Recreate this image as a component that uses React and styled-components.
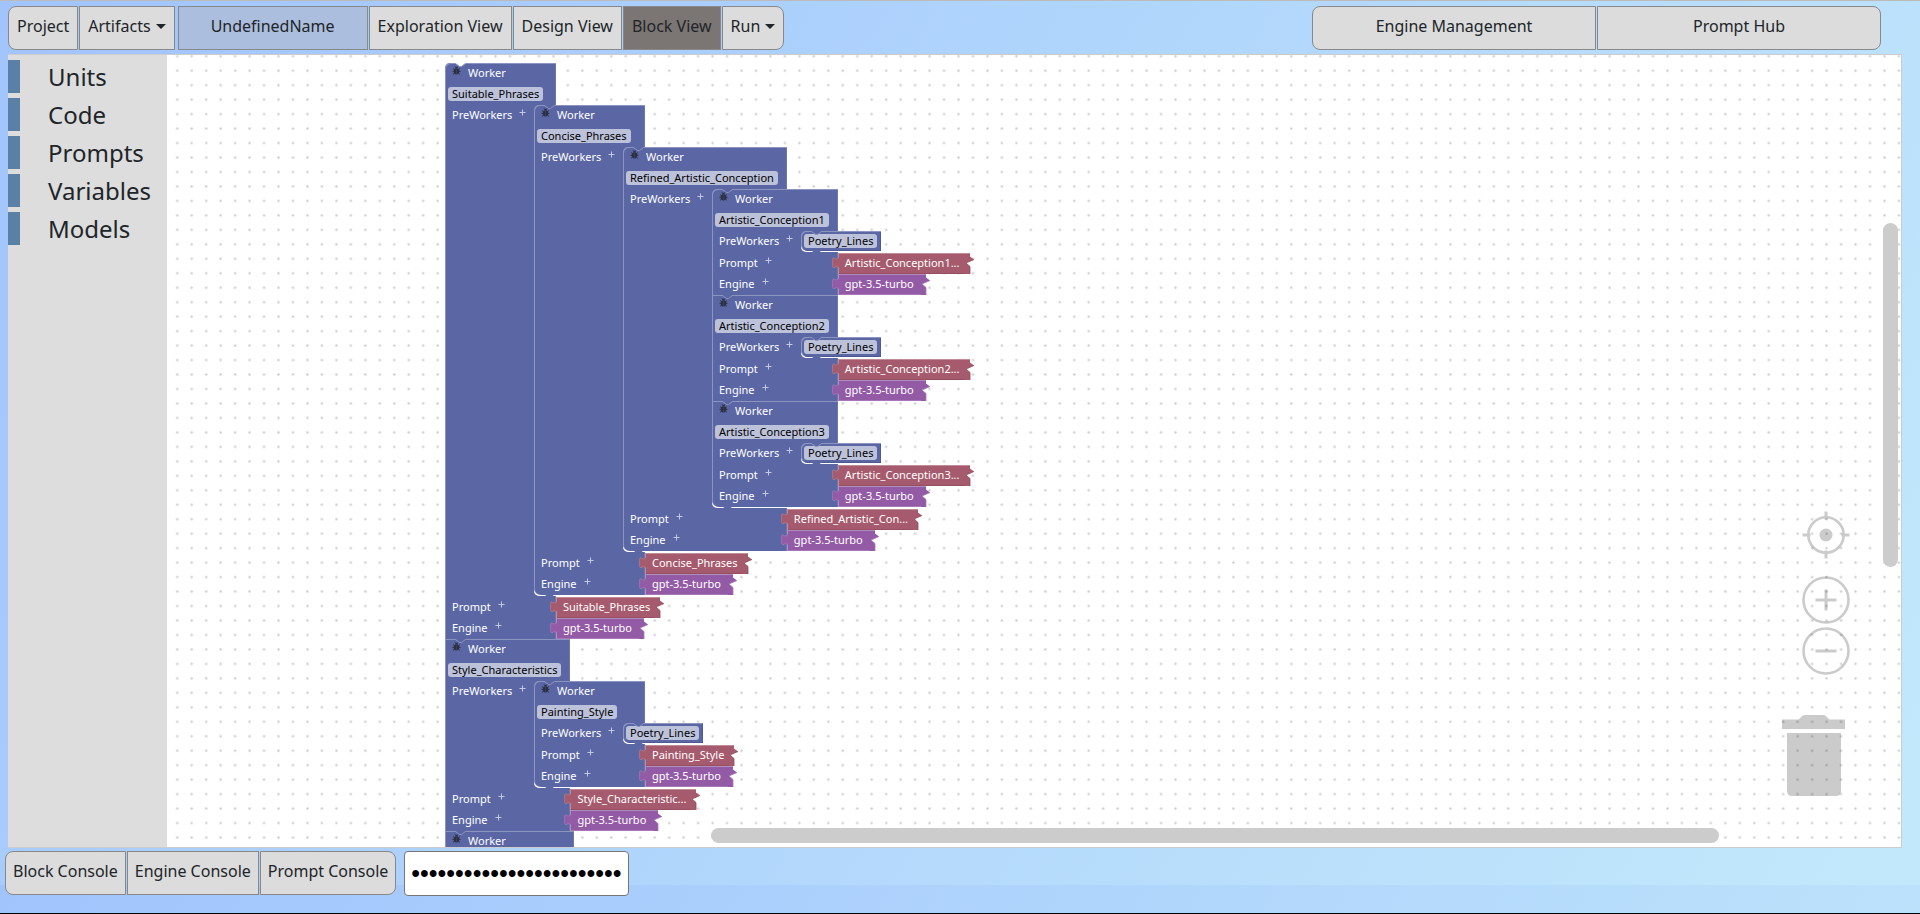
import React from 'react';
import styled, { createGlobalStyle, css } from 'styled-components';

const colors = {
  worker: '#5b67a5',
  prompt: '#a55b6d',
  engine: '#935ba5',
};

const GlobalStyle = createGlobalStyle`
  *, *::before, *::after { box-sizing: border-box; }
  body {
    margin: 0;
    color: #212529;
    font-family: 'Noto Sans', 'Open Sans', sans-serif;
    font-size: 16px;
    line-height: 24px;
  }
  button, input { font: inherit; color: inherit; }
`;

const Page = styled.div`
  display: flex;
  flex-direction: column;
  height: 100vh;
  border-top: 1px solid #bbb;
  border-bottom: 1px solid #000;
  background: linear-gradient(120deg, #a1c4fd, #c2e9fb) 0 0 / 100% calc(100% - 28px);
`;

const TopBar = styled.header`
  display: flex;
  justify-content: space-between;
  padding: 5px 39px 4px 8px;
`;

const ButtonGroup = styled.div`
  display: flex;
  gap: 1px;

  > button:first-child {
    border-top-left-radius: 8px;
    border-bottom-left-radius: 8px;
  }
  > button:last-child {
    border-top-right-radius: 8px;
    border-bottom-right-radius: 8px;
  }
`;

const tones = {
  plain: '#dcdcdc',
  name: '#acbedd',
  active: '#7b7574',
};

const BarButton = styled.button`
  display: flex;
  align-items: center;
  justify-content: center;
  gap: 5px;
  height: 44px;
  min-width: ${(p) => p.$minWidth || 0}px;
  padding: 6px ${(p) => (p.$compact ? 7 : 8)}px 10px;
  border: 1px solid #888;
  border-radius: 0;
  background: ${(p) => tones[p.$tone || 'plain']};
  white-space: nowrap;
`;

const NameButton = styled(BarButton)`
  margin-left: 2px;
`;

const Caret = styled.span`
  border: 5px solid transparent;
  border-top-color: currentColor;
  border-bottom: 0;
`;

const Workspace = styled.main`
  display: flex;
  flex: 1;
  min-height: 0;
  margin: 0 18px 0 8px;
  border: 1px solid #ccc;
  border-left: 0;
  background: #fff;
`;

const Toolbox = styled.nav`
  display: flex;
  flex-direction: column;
  gap: 5px;
  width: 159px;
  padding-top: 5px;
  background: #ddd;
`;

const Category = styled.button`
  height: 33px;
  padding: 0 0 0 28px;
  border: 0;
  border-left: 12px solid #5b80a5;
  background: none;
  font-size: 24px;
  line-height: 33px;
  text-align: left;
`;

const Canvas = styled.section`
  position: relative;
  flex: 1;
  overflow: hidden;
  padding: 8px 0 0 278px;
`;

const Grid = styled.svg`
  position: absolute;
  inset: 0;
  width: 100%;
  height: 100%;
`;

const Program = styled.div`
  position: relative;
  display: flex;
  flex-direction: column;
  width: max-content;
  color: #fff;
  font-size: 11px;
  line-height: 20px;
  white-space: nowrap;
`;

const Block = styled.article`
  position: relative;
  display: grid;
  grid-template-columns: 89px minmax(22px, 1fr);
  width: max-content;
  min-width: ${(p) => p.$minWidth || 0}px;
  background: ${colors.worker};
  box-shadow: inset 1px 1px #8c95c0, inset -1px 0 #6c77ae;
  border-top-left-radius: ${(p) => (p.$first ? 5 : 0)}px;
  border-bottom-left-radius: ${(p) => (p.$last ? 7 : 0)}px;
`;

const HeaderRow = styled.header`
  grid-column: 1 / -1;
  display: flex;
  align-items: flex-start;
  gap: 7px;
  height: 21px;
  padding: 3px 0 0 7px;
  line-height: 13px;
`;

const FieldRow = styled.div`
  grid-column: 1 / -1;
  height: 21px;
  padding: 3px 9px 0 3px;
`;

const Field = styled.button`
  display: block;
  height: 14px;
  padding: 0 4px;
  border: 0;
  border-radius: 3px;
  background: #bdc2db;
  color: #000;
  line-height: 14px;
`;

const Label = styled.div`
  display: flex;
  gap: 7px;
  height: 21px;
  padding-left: 7px;
`;

const Statement = styled.div`
  position: relative;
  display: flex;
  flex-direction: column;
  width: 0;
  min-width: 100%;
  margin-bottom: 1px;
  padding-bottom: 1px;
  border-bottom-left-radius: 5px;
  background: linear-gradient(to top, #fff 8px, transparent 8px);
`;

const VariableBlock = styled.div`
  position: relative;
  width: max-content;
  height: 20px;
  padding: 3px 4px 3px 3px;
  border-radius: 5px 0 0 7px;
  background: ${colors.worker};
  box-shadow: inset 1px 1px #8c95c0, inset -1px -1px #4f5a94;
`;

const ValueRow = styled.div`
  grid-column: 1 / -1;
  display: flex;
  justify-content: space-between;
  height: 21px;
`;

const Socket = styled.div`
  position: relative;
  display: flex;
  width: 0;
`;

const ValueBody = styled.div`
  height: 21px;
  ${(p) =>
    p.$kind === 'prompt'
      ? css`padding: 0 5px 0 7px; box-shadow: inset 1px 1px #c08c98, inset 0 -1px #944f60;`
      : css`padding: 0 7px; box-shadow: inset 1px 1px #b38cc0, inset 0 -1px #a777b6;`}
  background: ${(p) => colors[p.$kind]};
`;

const TabShape = styled.svg`
  position: absolute;
  top: 3px;
  left: -6px;
`;

const TeethShape = styled.svg`
  flex: none;
`;

const NotchShape = styled.svg`
  position: absolute;
  top: 0;
  left: 9px;
`;

const NubShape = styled.svg`
  position: absolute;
  bottom: -3px;
  left: 9px;
`;

const PlusShape = styled.svg`
  margin-top: 4px;
`;

const Scrollbar = styled.div`
  position: absolute;
  border-radius: 8px;
  background: #ccc;
  ${(p) =>
    p.$vertical
      ? css`top: 168px; right: 3px; width: 15px; height: 344px;`
      : css`left: 544px; right: 182px; bottom: 4px; height: 15px;`}
`;

const Controls = styled.div`
  position: absolute;
  right: 51px;
  bottom: 51px;
  display: flex;
  flex-direction: column;
  align-items: flex-end;
  color: #000;
`;

const ControlButton = styled.button`
  display: block;
  margin-bottom: ${(p) => p.$after || 0}px;
  padding: 0;
  border: 0;
  background: none;
  line-height: 0;
`;

const BottomBar = styled.footer`
  display: flex;
  gap: 8px;
  height: 65px;
  padding: 3px 5px 0;
`;

const KeyInput = styled.input`
  width: 225px;
  height: 45px;
  padding: 0 6px;
  border: 1px solid #767676;
  border-radius: 4px;
  background: #fff;
  color: #000;
  font-family: 'Liberation Sans', Arial, sans-serif;
  font-size: 25px;
`;

const Plus = () => (
  <PlusShape width="7" height="7" viewBox="0 0 7 7" aria-hidden="true">
    <path d="M3.5 0.5v6M0.5 3.5h6" stroke="#c4c9e2" strokeWidth="1" />
  </PlusShape>
);

const Bug = () => (
  <svg width="9" height="9" viewBox="0 0 9 9" aria-hidden="true">
    <path d="M3 2.2a1.5 1.5 0 0 1 3 0z" fill="#2c3042" />
    <ellipse cx="4.5" cy="5.3" rx="2.8" ry="3.1" fill="#2c3042" />
    <path d="M0.5 5.4h8M1 2.6l2 1.4M8 2.6L6 4M1 8.4l2-1.6M8 8.4L6 6.8M3 0.3l.8 1M6 0.3l-.8 1" stroke="#2c3042" strokeWidth="0.9" fill="none" />
    <path d="M4.5 3.4v4.6" stroke="#5b67a5" strokeWidth="0.3" />
  </svg>
);

const Notch = ({ open }) => (
  <NotchShape width="14" height="5" viewBox="0 0 14 5" aria-hidden="true">
    <path d="M1 0L5.5 3.5H7.5L12 0z" fill={open ? '#fff' : colors.worker} />
    <path d="M0 .5H1.5L5.5 3.5H7.5L11.5 .5H14" fill="none" stroke="#8c95c0" />
  </NotchShape>
);

const Nub = () => (
  <NubShape width="14" height="4" viewBox="0 0 14 4" aria-hidden="true">
    <path d="M1 0L5.5 4H7.5L12 0z" fill={colors.worker} />
  </NubShape>
);

const Value = ({ kind, children }) => (
  <Socket>
    <TabShape width="7" height="13" viewBox="0 0 7 13" aria-hidden="true">
      <path
        d="M7 1.5C5 3 4.500 3.500 2.500 2.200C1 1 .6 2.500 .6 4V9.500C.6 11.500 1.500 12.500 3 11.200C4.500 10 5.500 11 7 11.500z"
        fill={colors[kind]}
        stroke={kind === 'prompt' ? '#b9808e' : '#a97cb8'}
        strokeWidth="0.7"
      />
      <path d="M6.300 2.500H7V11H6.300z" fill={colors[kind]} />
    </TabShape>
    <ValueBody $kind={kind}>{children}</ValueBody>
    <TeethShape width="9" height="21" viewBox="0 0 9 21" aria-hidden="true">
      <path d="M0 0H5V3.500L9 6.500L1 10L5 13.500V21H0z" fill={colors[kind]} />
      <path d="M0 .5H5" stroke={kind === 'prompt' ? '#c08c98' : '#b38cc0'} />
      <path d="M5 21V13.500L1 10L9 6.500" fill="none" stroke={kind === 'prompt' ? '#8f4b5c' : '#a777b6'} strokeWidth="0.8" />
    </TeethShape>
  </Socket>
);

const Variable = ({ name }) => (
  <VariableBlock>
    <Notch />
    <Field>{name}</Field>
    <Nub />
  </VariableBlock>
);

const Worker = ({ name, prompt, engine = 'gpt-3.5-turbo', first, last, open, minWidth, children }) => (
  <Block $first={first} $last={last} $minWidth={minWidth}>
    <Notch open={open} />
    <HeaderRow>
      <Bug />
      <span>Worker</span>
    </HeaderRow>
    {name && (
      <>
        <FieldRow>
          <Field>{name}</Field>
        </FieldRow>
        <Label>
          <span>PreWorkers</span>
          <Plus />
        </Label>
        <Statement>{children}</Statement>
        <ValueRow>
          <Label>
            <span>Prompt</span>
            <Plus />
          </Label>
          <Value kind="prompt">{prompt}</Value>
        </ValueRow>
        <ValueRow>
          <Label>
            <span>Engine</span>
            <Plus />
          </Label>
          <Value kind="engine">{engine}</Value>
        </ValueRow>
      </>
    )}
    {last && <Nub />}
  </Block>
);

const categories = ['Units', 'Code', 'Prompts', 'Variables', 'Models'];

export default function App() {
  return (
    <>
      <GlobalStyle />
      <Page>
        <TopBar>
          <ButtonGroup>
            <BarButton>Project</BarButton>
            <BarButton>Artifacts <Caret /></BarButton>
            <NameButton $tone="name" $minWidth={190}>UndefinedName</NameButton>
            <BarButton>Exploration View</BarButton>
            <BarButton>Design View</BarButton>
            <BarButton $tone="active">Block View</BarButton>
            <BarButton>Run <Caret /></BarButton>
          </ButtonGroup>
          <ButtonGroup>
            <BarButton $minWidth={284}>Engine Management</BarButton>
            <BarButton $minWidth={284}>Prompt Hub</BarButton>
          </ButtonGroup>
        </TopBar>

        <Workspace>
          <Toolbox aria-label="Block categories">
            {categories.map((c) => (
              <Category key={c}>{c}</Category>
            ))}
          </Toolbox>
          <Canvas>
            <Grid aria-hidden="true">
              <defs>
                <pattern id="dots" width="20" height="20" patternUnits="userSpaceOnUse" patternTransform="translate(3 -6) scale(0.7234)">
                  <circle cx="10" cy="10" r="1.600" fill="#ccc" />
                </pattern>
              </defs>
              <rect width="100%" height="100%" fill="url(#dots)" />
            </Grid>

            <Program>
              <Worker name="Suitable_Phrases" prompt="Suitable_Phrases" first open>
                <Worker name="Concise_Phrases" prompt="Concise_Phrases" first last>
                  <Worker name="Refined_Artistic_Conception" prompt="Refined_Artistic_Con..." first last>
                    <Worker name="Artistic_Conception1" prompt="Artistic_Conception1..." first>
                      <Variable name="Poetry_Lines" />
                    </Worker>
                    <Worker name="Artistic_Conception2" prompt="Artistic_Conception2...">
                      <Variable name="Poetry_Lines" />
                    </Worker>
                    <Worker name="Artistic_Conception3" prompt="Artistic_Conception3..." last>
                      <Variable name="Poetry_Lines" />
                    </Worker>
                  </Worker>
                </Worker>
              </Worker>
              <Worker name="Style_Characteristics" prompt="Style_Characteristic...">
                <Worker name="Painting_Style" prompt="Painting_Style" first last>
                  <Variable name="Poetry_Lines" />
                </Worker>
              </Worker>
              <Worker minWidth={129} />
            </Program>

            <Controls>
              <ControlButton aria-label="Center" $after={17}>
                <svg width="48" height="48" viewBox="0 0 48 48" opacity="0.2">
                  <circle cx="24" cy="24" r="17.700" fill="none" stroke="#000" strokeWidth="2.600" />
                  <circle cx="24" cy="24" r="6.500" />
                  <path d="M24 0.500v8M24 39.500v8M0.500 24h8M39.500 24h8" stroke="#000" strokeWidth="3" />
                </svg>
              </ControlButton>
              <ControlButton aria-label="Zoom in" $after={3}>
                <svg width="48" height="48" viewBox="0 0 48 48" opacity="0.2">
                  <circle cx="24" cy="24" r="22.500" fill="none" stroke="#000" strokeWidth="2.600" />
                  <path d="M13.500 24h21M24 13.500v21" stroke="#000" strokeWidth="3" />
                </svg>
              </ControlButton>
              <ControlButton aria-label="Zoom out" $after={40}>
                <svg width="48" height="48" viewBox="0 0 48 48" opacity="0.2">
                  <circle cx="24" cy="24" r="22.500" fill="none" stroke="#000" strokeWidth="2.600" />
                  <path d="M13.500 24h21" stroke="#000" strokeWidth="3" />
                </svg>
              </ControlButton>
              <ControlButton aria-label="Trash">
                <svg width="68" height="81" viewBox="0 0 68 81" opacity="0.2">
                  <path d="M0 4.500H16.500L20 1.200Q21 0 23 0H41Q43 0 44 1.200L47.500 4.500H63V14H0z" />
                  <path d="M5 18H59V76Q59 81 54 81H10Q5 81 5 76z" />
                </svg>
              </ControlButton>
            </Controls>
            <Scrollbar $vertical />
            <Scrollbar />
          </Canvas>
        </Workspace>

        <BottomBar>
          <ButtonGroup>
            <BarButton $compact>Block Console</BarButton>
            <BarButton $compact>Engine Console</BarButton>
            <BarButton $compact>Prompt Console</BarButton>
          </ButtonGroup>
          <KeyInput type="password" aria-label="API key" defaultValue={'0'.repeat(24)} />
        </BottomBar>
      </Page>
    </>
  );
}
